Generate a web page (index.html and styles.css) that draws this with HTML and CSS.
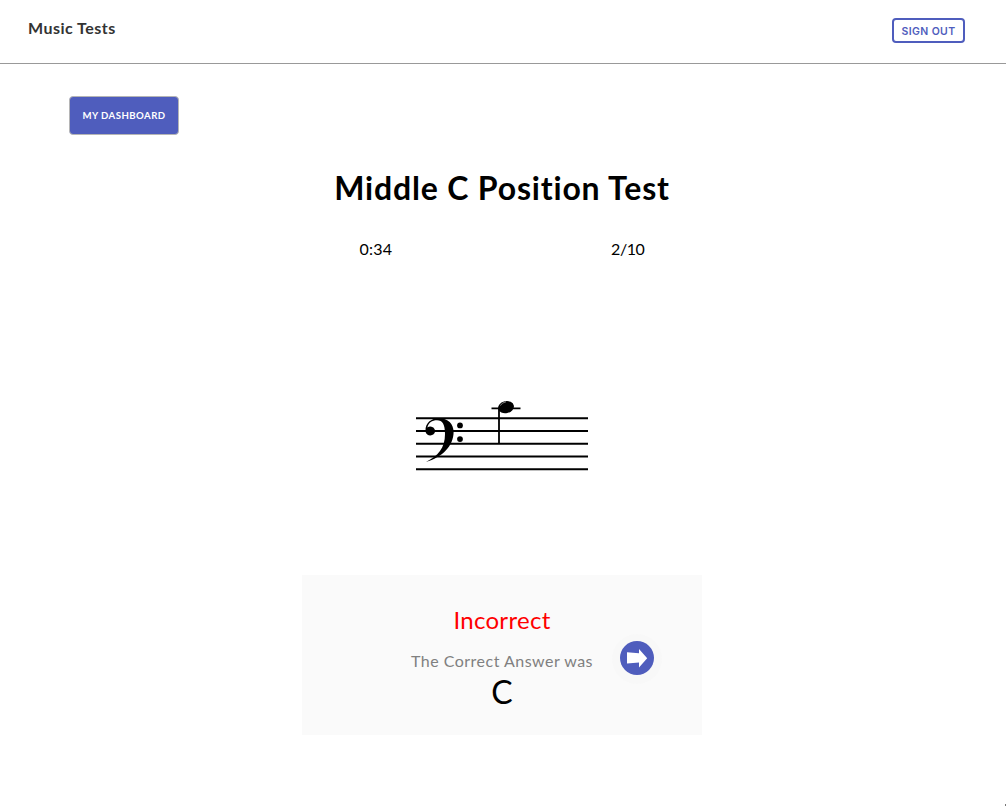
FILE: index.html
```html
<!DOCTYPE html>
<html lang="en">
<head>
<meta charset="utf-8">
<title>Music Tests</title>
<link rel="stylesheet" href="styles.css">
</head>
<body>
<header class="topbar">
  <span class="brand">Music Tests</span>
  <button class="sign-out">SIGN OUT</button>
</header>
<main class="page">
  <button class="dashboard">MY DASHBOARD</button>
  <h1 class="title"><span>Middle C Position Test</span></h1>
  <div class="stats"><span class="time">0:34</span><span class="count">2/10</span></div>
  <svg class="staff" viewBox="416 396 172 80" role="img" aria-label="Bass staff">
    <path d="M416 418.3H588M416 431H588M416 443.7H588M416 456.4H588M416 469.2H588" stroke="#000" stroke-width="2"/>
    <path d="M491.5 408.3H520.5M499 408V443.5" stroke="#000" stroke-width="1.8"/>
    <ellipse cx="506" cy="407.2" rx="8" ry="6" transform="rotate(-12 506 407.2)"/>
    <path d="M500.2 405.5Q502.5 402.4 506 401.8" fill="none" stroke="#fff" stroke-width=".5"/>
    <path d="M426 461.9C438 456 445 448 445 434C445 424.5 442.5 420.3 437 420.3C432 420.3 428.6 422.5 427.4 427.5A4.8 4.4 0 1 1 425.5 431C425.2 423 431 418.3 439 418.3C448 418.3 453.6 424 453.6 432C453.6 446 442 457.5 426 461.9Z"/>
    <circle cx="460" cy="425.4" r="2.9"/>
    <circle cx="460" cy="439.1" r="2.9"/>
  </svg>
  <section class="result">
    <div class="verdict">Incorrect</div>
    <div class="hint">The Correct Answer was</div>
    <div class="answer">C</div>
    <button class="next" aria-label="Next">
      <svg viewBox="0 0 34 34"><path d="M7 11.3L19 12.3V8L27.2 17.2L19 26.6V21.4L7 22.6Z" fill="#fff"/></svg>
    </button>
  </section>
</main>
<i class="corner"></i>
</body>
</html>
```
FILE: styles.css
```css
* { box-sizing: border-box; }
body { margin: 0; background: #fff; color: #000; font-family: Lato, "Open Sans", sans-serif; height: 806px; overflow: hidden; position: relative; }
button { font-family: inherit; padding: 0; }
.topbar { height: 64px; border-bottom: 1px solid #999; display: flex; justify-content: space-between; align-items: flex-start; padding: 18px 41px 0 28px; }
.brand { font-size: 16px; line-height: 20px; font-weight: 700; color: #333; letter-spacing: .48px; white-space: nowrap; }
.sign-out { width: 73px; height: 25px; padding-top: 2px; border: 2px solid #4f5dbd; border-radius: 4px; background: #fff; color: #4f5dbd; font: 600 10.5px/19px Inter, sans-serif; letter-spacing: .4px; white-space: nowrap; }
.page { display: flex; flex-direction: column; align-items: center; padding-top: 32px; width: 1004px; }
.dashboard { align-self: flex-start; margin-left: 69px; width: 110px; height: 39px; border: 1px solid #b5b5b5; border-radius: 4px; background: #4f5dbd; color: #fff; font-size: 9.6px; font-weight: 700; letter-spacing: .46px; white-space: nowrap; }
.title { margin: 33px 0 0; font-size: 32px; line-height: 40px; font-weight: 700; letter-spacing: .82px; white-space: nowrap; }
.stats { width: 285px; margin-top: 31px; display: flex; justify-content: space-between; font-size: 16px; line-height: 20px; }
.time { letter-spacing: .2px; }
.count { letter-spacing: -.4px; }
.staff { display: block; width: 172px; height: 80px; margin-top: 137px; }
.result { position: relative; width: 400px; height: 160px; margin-top: 99px; background: #fafafa; text-align: center; padding-top: 30px; }
.verdict { font-size: 24px; line-height: 30px; color: #f00; letter-spacing: .3px; }
.hint { font-size: 16px; line-height: 20px; margin-top: 16px; color: #808080; letter-spacing: .49px; }
.answer { font-size: 32px; line-height: 40px; margin-top: 1px; }
.next { position: absolute; left: 318px; top: 66px; width: 34px; height: 34px; border: 0; border-radius: 50%; background: #4f5dbd; box-shadow: 0 1px 0 8px #f8f8f8; }
.next svg { display: block; width: 34px; height: 34px; }
.corner { position: absolute; right: 0; bottom: 0; width: 1px; height: 2px; background: #777; }
```
